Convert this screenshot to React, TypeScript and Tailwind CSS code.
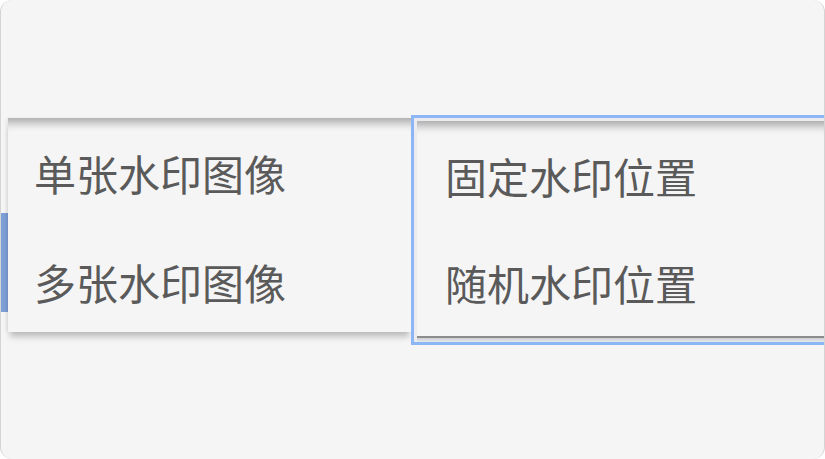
import React from "react";

const font = { fontFamily: '"Noto Sans CJK SC", "Noto Sans", sans-serif' };

export default function App() {
  return (
    <div className="w-[825px] h-[459px] bg-white" style={font}>
      <div className="w-full h-full rounded-[12px] bg-[#f5f5f5] border-r border-l border-[#d4d4d4] overflow-hidden flex flex-col">
        <div className="h-[115px] shrink-0" />
        <div className="flex items-start">
          {/* left edge blue strip */}
          <div className="w-[7px] shrink-0 flex flex-col">
            <div className="h-[98px]" />
            <div className="h-[99px] bg-[#7ea0d8]" />
          </div>
          {/* left menu */}
          <div className="w-[403px] shrink-0 mt-[3px] h-[214px] bg-[#f5f5f5] flex flex-col pl-[26px] shadow-[inset_0_13px_9px_-8px_rgba(0,0,0,0.3),0_7px_6px_-2px_rgba(0,0,0,0.22),-2px_0_3px_rgba(0,0,0,0.06)] text-[42px] leading-none text-[#5a5a5a]">
            <div className="h-[109px] shrink-0 flex items-center">单张水印图像</div>
            <div className="h-[109px] shrink-0 flex items-center">多张水印图像</div>
          </div>
          {/* right menu with focus ring */}
          <div className="flex-1 h-[230px] border-[3px] border-r-0 border-[#8db6f4] bg-[#e9ebef] pl-[3px] pt-[3px] flex flex-col">
            <div className="h-[217px] shrink-0 bg-[#f5f5f5] border-b-2 border-[#8c8c8c] flex flex-col pt-[1px] pl-[28px] shadow-[inset_0_13px_9px_-8px_rgba(0,0,0,0.3)] text-[42px] leading-none text-[#5a5a5a]">
              <div className="h-[108px] shrink-0 flex items-center">固定水印位置</div>
              <div className="h-[106px] shrink-0 flex items-center">随机水印位置</div>
            </div>
            <div className="flex-1 bg-gradient-to-b from-[#cfcfcf] to-[#e4e8f0]" />
          </div>
        </div>
      </div>
    </div>
  );
}
